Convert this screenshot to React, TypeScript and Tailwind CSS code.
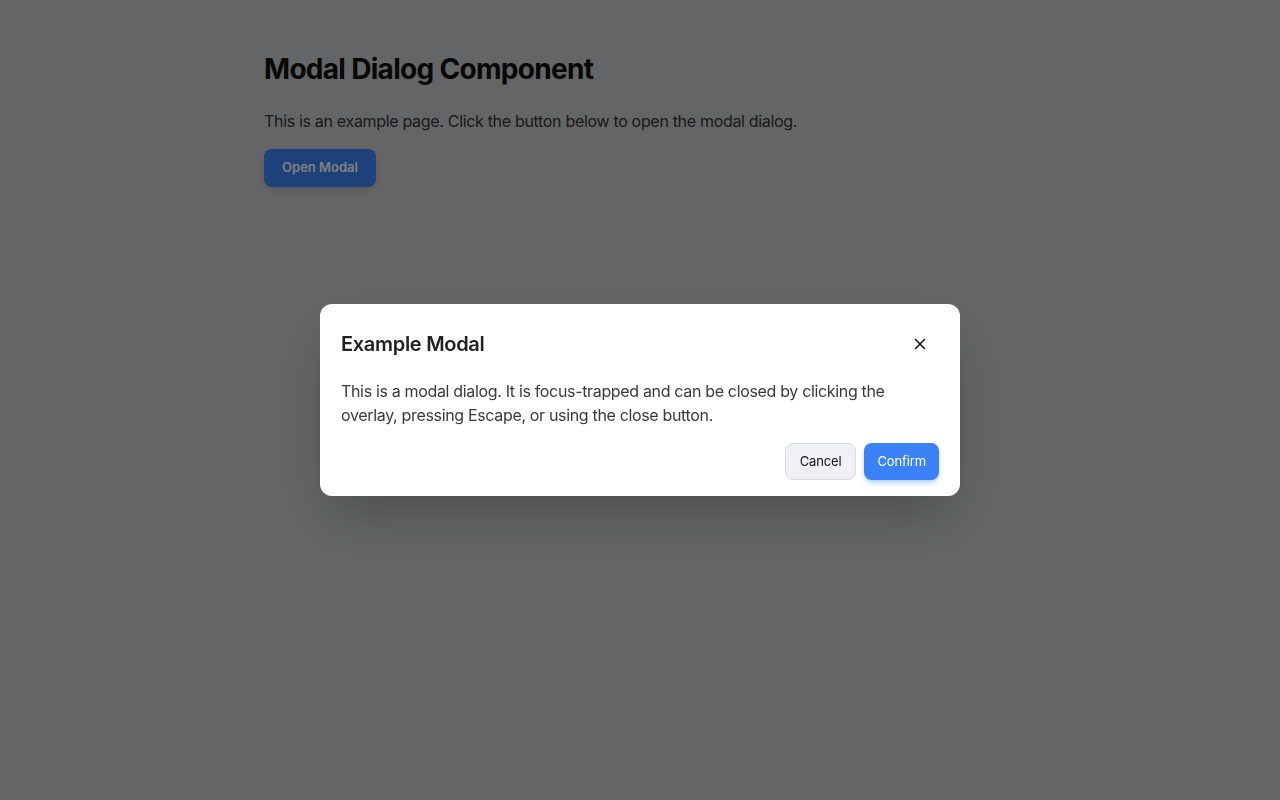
import { useState } from "react";

function CloseIcon() {
  return (
    <svg viewBox="0 0 24 24" fill="none" stroke="currentColor" className="h-[18px] w-[18px]">
      <path strokeLinecap="round" strokeWidth={2} d="M6 6l12 12M18 6L6 18" />
    </svg>
  );
}

export default function App() {
  const [open, setOpen] = useState(true);

  return (
    <div
      className="min-h-screen bg-[#c9cacd] text-[#111]"
      style={{ fontFamily: "Inter, 'Noto Sans', sans-serif" }}
    >
      <main className="mx-auto max-w-[752px] pt-[51px]">
        <h1 className="text-[28px] font-bold leading-9 tracking-[-0.025em] text-[#111]">
          Modal Dialog Component
        </h1>
        <p className="mt-[22px] text-base leading-6 tracking-[-0.02em] text-[#333]">
          This is an example page. Click the button below to open the modal dialog.
        </p>
        <button
          onClick={() => setOpen(true)}
          className="mt-4 h-[38px] w-[112px] rounded-lg bg-[#3b82f6] text-[13px] font-semibold text-white shadow-md"
        >
          Open Modal
        </button>
      </main>

      {open && (
        <div
          className="fixed inset-0 flex items-center justify-center bg-black/50"
          onClick={() => setOpen(false)}
        >
          <div
            role="dialog"
            aria-modal="true"
            onClick={(e) => e.stopPropagation()}
            className="w-[640px] rounded-xl bg-white pb-4 pl-[21px] pr-5 pt-5 shadow-2xl"
          >
            <div className="flex h-10 items-center justify-between">
              <h2 className="text-xl font-semibold tracking-[-0.015em] text-[#222]">
                Example Modal
              </h2>
              <button
                onClick={() => setOpen(false)}
                aria-label="Close"
                className="flex h-10 w-10 items-center justify-center rounded-md text-[#111]"
              >
                <CloseIcon />
              </button>
            </div>
            <p className="mt-[15px] text-base leading-6 tracking-[-0.021em] text-[#3a3a3a]">
              This is a modal dialog. It is focus-trapped and can be closed by clicking the
              overlay, pressing Escape, or using the close button.
            </p>
            <div className="mt-4 flex justify-end gap-2 pr-px">
              <button
                onClick={() => setOpen(false)}
                className="h-[37px] rounded-lg border border-[#d9dbe0] bg-[#f0f1f4] px-[14px] text-[13px] tracking-[-0.01em] text-[#111]"
              >
                Cancel
              </button>
              <button
                onClick={() => setOpen(false)}
                className="h-[37px] rounded-lg bg-[#3b82f6] px-[13px] text-[13px] tracking-[-0.01em] text-white shadow-md shadow-blue-500/30"
              >
                Confirm
              </button>
            </div>
          </div>
        </div>
      )}
    </div>
  );
}
